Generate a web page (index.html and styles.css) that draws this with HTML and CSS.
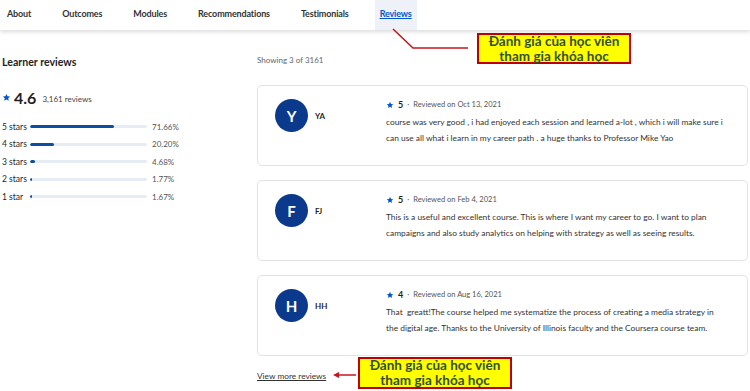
FILE: index.html
```html
<!DOCTYPE html>
<html lang="en">
<head>
    <meta charset="UTF-8">
    <meta name="viewport" content="width=device-width, initial-scale=1.0">
    <title>Reviews</title>
    <link rel="stylesheet" href="styles.css">
</head>
<body>
    <nav class="tabs">
        <a class="tab">About</a>
        <a class="tab">Outcomes</a>
        <a class="tab">Modules</a>
        <a class="tab">Recommendations</a>
        <a class="tab">Testimonials</a>
        <a class="tab active">Reviews</a>
    </nav>

    <main class="reviews">
        <aside class="summary">
            <h2 class="summary-title">Learner reviews</h2>
            <div class="score">
                <svg class="star star-big" viewBox="0 0 24 24"><path d="M12 2.5l2.9 6.3 6.9.7-5.2 4.6 1.5 6.8L12 17.4l-6.1 3.5 1.5-6.8-5.2-4.6 6.9-.7z"/></svg>
                <span class="avg">4.6</span>
                <span class="count">3,161 reviews</span>
            </div>
            <ul class="dist">
                <li class="dist-row"><span class="dist-label">5 stars</span><span class="track"><span class="fill" style="width: 71.66%"></span></span><span class="pct">71.66%</span></li>
                <li class="dist-row"><span class="dist-label">4 stars</span><span class="track"><span class="fill" style="width: 20.2%"></span></span><span class="pct">20.20%</span></li>
                <li class="dist-row"><span class="dist-label">3 stars</span><span class="track"><span class="fill" style="width: 4.68%"></span></span><span class="pct">4.68%</span></li>
                <li class="dist-row"><span class="dist-label">2 stars</span><span class="track"><span class="fill" style="width: 1.77%"></span></span><span class="pct">1.77%</span></li>
                <li class="dist-row"><span class="dist-label">1 star</span><span class="track"><span class="fill" style="width: 1.67%"></span></span><span class="pct">1.67%</span></li>
            </ul>
        </aside>

        <section class="list">
            <p class="showing">Showing 3 of 3161</p>

            <article class="card">
                <div class="reviewer">
                    <div class="avatar">Y</div>
                    <span class="name">YA</span>
                </div>
                <div class="review">
                    <div class="meta">
                        <svg class="star" viewBox="0 0 24 24"><path d="M12 2.5l2.9 6.3 6.9.7-5.2 4.6 1.5 6.8L12 17.4l-6.1 3.5 1.5-6.8-5.2-4.6 6.9-.7z"/></svg>
                        <b class="rating">5</b>
                        <span class="dot">·</span>
                        <span class="date">Reviewed on Oct 13, 2021</span>
                    </div>
                    <p class="text">course was very good , i had enjoyed each session and learned a-lot , which i will make sure i can use all what i learn in my career path . a huge thanks to Professor Mike Yao</p>
                </div>
            </article>

            <article class="card">
                <div class="reviewer">
                    <div class="avatar">F</div>
                    <span class="name">FJ</span>
                </div>
                <div class="review">
                    <div class="meta">
                        <svg class="star" viewBox="0 0 24 24"><path d="M12 2.5l2.9 6.3 6.9.7-5.2 4.6 1.5 6.8L12 17.4l-6.1 3.5 1.5-6.8-5.2-4.6 6.9-.7z"/></svg>
                        <b class="rating">5</b>
                        <span class="dot">·</span>
                        <span class="date">Reviewed on Feb 4, 2021</span>
                    </div>
                    <p class="text">This is a useful and excellent course. This is where I want my career to go. I want to plan campaigns and also study analytics on helping with strategy as well as seeing results.</p>
                </div>
            </article>

            <article class="card">
                <div class="reviewer">
                    <div class="avatar">H</div>
                    <span class="name">HH</span>
                </div>
                <div class="review">
                    <div class="meta">
                        <svg class="star" viewBox="0 0 24 24"><path d="M12 2.5l2.9 6.3 6.9.7-5.2 4.6 1.5 6.8L12 17.4l-6.1 3.5 1.5-6.8-5.2-4.6 6.9-.7z"/></svg>
                        <b class="rating">4</b>
                        <span class="dot">·</span>
                        <span class="date">Reviewed on Aug 16, 2021</span>
                    </div>
                    <p class="text">That &nbsp;greatt!The course helped me systematize the process of creating a media strategy in the digital age. Thanks to the University of Illinois faculty and the Coursera course team.</p>
                </div>
            </article>

            <a class="more">View more reviews</a>
        </section>
    </main>

    <!-- chú thích -->
    <svg class="pointers" viewBox="0 0 750 391">
        <polyline points="393,29 413,48 468,48" />
        <line x1="337" y1="375" x2="356" y2="375" />
        <polygon points="333,375 339,372 339,378" />
    </svg>
    <div class="note note-top">Đánh giá của học viên<br>tham gia khóa học</div>
    <div class="note note-bottom">Đánh giá của học viên<br>tham gia khóa học</div>
</body>
</html>
```

FILE: styles.css
```css
* {
    margin: 0;
    padding: 0;
    box-sizing: border-box;
}

html, body {
    width: 100%;
    height: 100%;
    overflow: hidden;
}

body {
    font-family: 'Lato', 'Noto Sans', sans-serif;
    color: #1f1f1f;
    background-color: #ffffff;
    position: relative;
}

/* thanh tab */
.tabs {
    height: 30px;
    display: flex;
    align-items: stretch;
    gap: 21px;
    padding-left: 2px;
    background-color: #ffffff;
    box-shadow: 0 2px 4px rgba(0, 0, 0, 0.14);
    position: relative;
    z-index: 1;
}

.tab {
    display: flex;
    align-items: center;
    padding: 0 5px 3px;
    font-size: 9px;
    font-weight: 700;
    letter-spacing: -0.15px;
    color: #333333;
}

.tab.active {
    background-color: #eef2f8;
    color: #0056d2;
    text-decoration: underline;
}

.reviews {
    display: flex;
    padding-top: 24px;
}

/* cột trái */
.summary {
    flex: 0 0 257px;
    padding-left: 2px;
}

.summary-title {
    font-size: 10.6px;
    font-weight: 700;
    line-height: 16px;
}

.score {
    display: flex;
    align-items: center;
    height: 20px;
    margin-top: 17px;
}

.star {
    width: 8px;
    height: 8px;
    fill: #0056d2;
}

.star-big {
    width: 9px;
    height: 9px;
}

.avg {
    font-size: 16px;
    font-weight: 700;
    margin-left: 3px;
}

.count {
    font-size: 8px;
    color: #444444;
    margin-left: 6px;
    margin-top: 3px;
}

.dist {
    list-style: none;
    margin-top: 11px;
}

.dist-row {
    display: flex;
    align-items: center;
    height: 17.5px;
    font-size: 8.5px;
}

.dist-label {
    width: 28px;
}

.track {
    width: 117px;
    height: 3px;
    border-radius: 2px;
    background-color: #e6ecf3;
    overflow: hidden;
}

.fill {
    display: block;
    height: 100%;
    min-width: 2px;
    border-radius: 2px;
    background-color: #0b4ea2;
}

.pct {
    margin-left: 5px;
    color: #555555;
    font-size: 8px;
}

/* cột phải */
.list {
    flex: 1;
    padding-right: 2px;
}

.showing {
    font-size: 8px;
    line-height: 12px;
    color: #666666;
}

.card {
    display: flex;
    height: 81px;
    margin-top: 19px;
    margin-bottom: -5px;
    padding: 13px 20px 0 17px;
    border: 1px solid #e3e3e3;
    border-radius: 5px;
}

.reviewer {
    flex: 0 0 111px;
    display: flex;
    align-items: center;
    align-self: flex-start;
    gap: 7px;
}

.avatar {
    width: 33px;
    height: 33px;
    border-radius: 50%;
    background-color: #0b3a8c;
    color: #ffffff;
    display: flex;
    align-items: center;
    justify-content: center;
    font-size: 15px;
    font-weight: 700;
}

.name {
    font-size: 8px;
    font-weight: 700;
}

.review {
    flex: 1;
}

.meta {
    display: flex;
    align-items: center;
    gap: 4px;
    height: 11px;
    font-size: 7.5px;
    color: #555555;
}

.rating {
    font-size: 9px;
    color: #1f1f1f;
}

.text {
    margin-top: 4px;
    font-size: 8.4px;
    line-height: 16px;
    color: #333333;
}

.more {
    display: block;
    margin-top: 19px;
    font-size: 8.3px;
    line-height: 12px;
    color: #333333;
    text-decoration: underline;
}

/* chú thích đỏ vàng */
.pointers {
    position: absolute;
    top: 0;
    left: 0;
    width: 750px;
    height: 391px;
    z-index: 2;
    pointer-events: none;
}

.pointers polyline,
.pointers line {
    fill: none;
    stroke: #c4161c;
    stroke-width: 1.5;
}

.pointers polygon {
    fill: #c4161c;
}

.note {
    position: absolute;
    z-index: 3;
    display: flex;
    align-items: center;
    justify-content: center;
    text-align: center;
    background-color: #ffff00;
    border: 2px solid #c00000;
    font-size: 13.5px;
    font-weight: 700;
    line-height: 15px;
    color: #33502c;
}

.note-top {
    left: 477px;
    top: 33px;
    width: 154px;
    height: 31px;
}

.note-bottom {
    left: 358px;
    top: 357px;
    width: 154px;
    height: 32px;
}
```
